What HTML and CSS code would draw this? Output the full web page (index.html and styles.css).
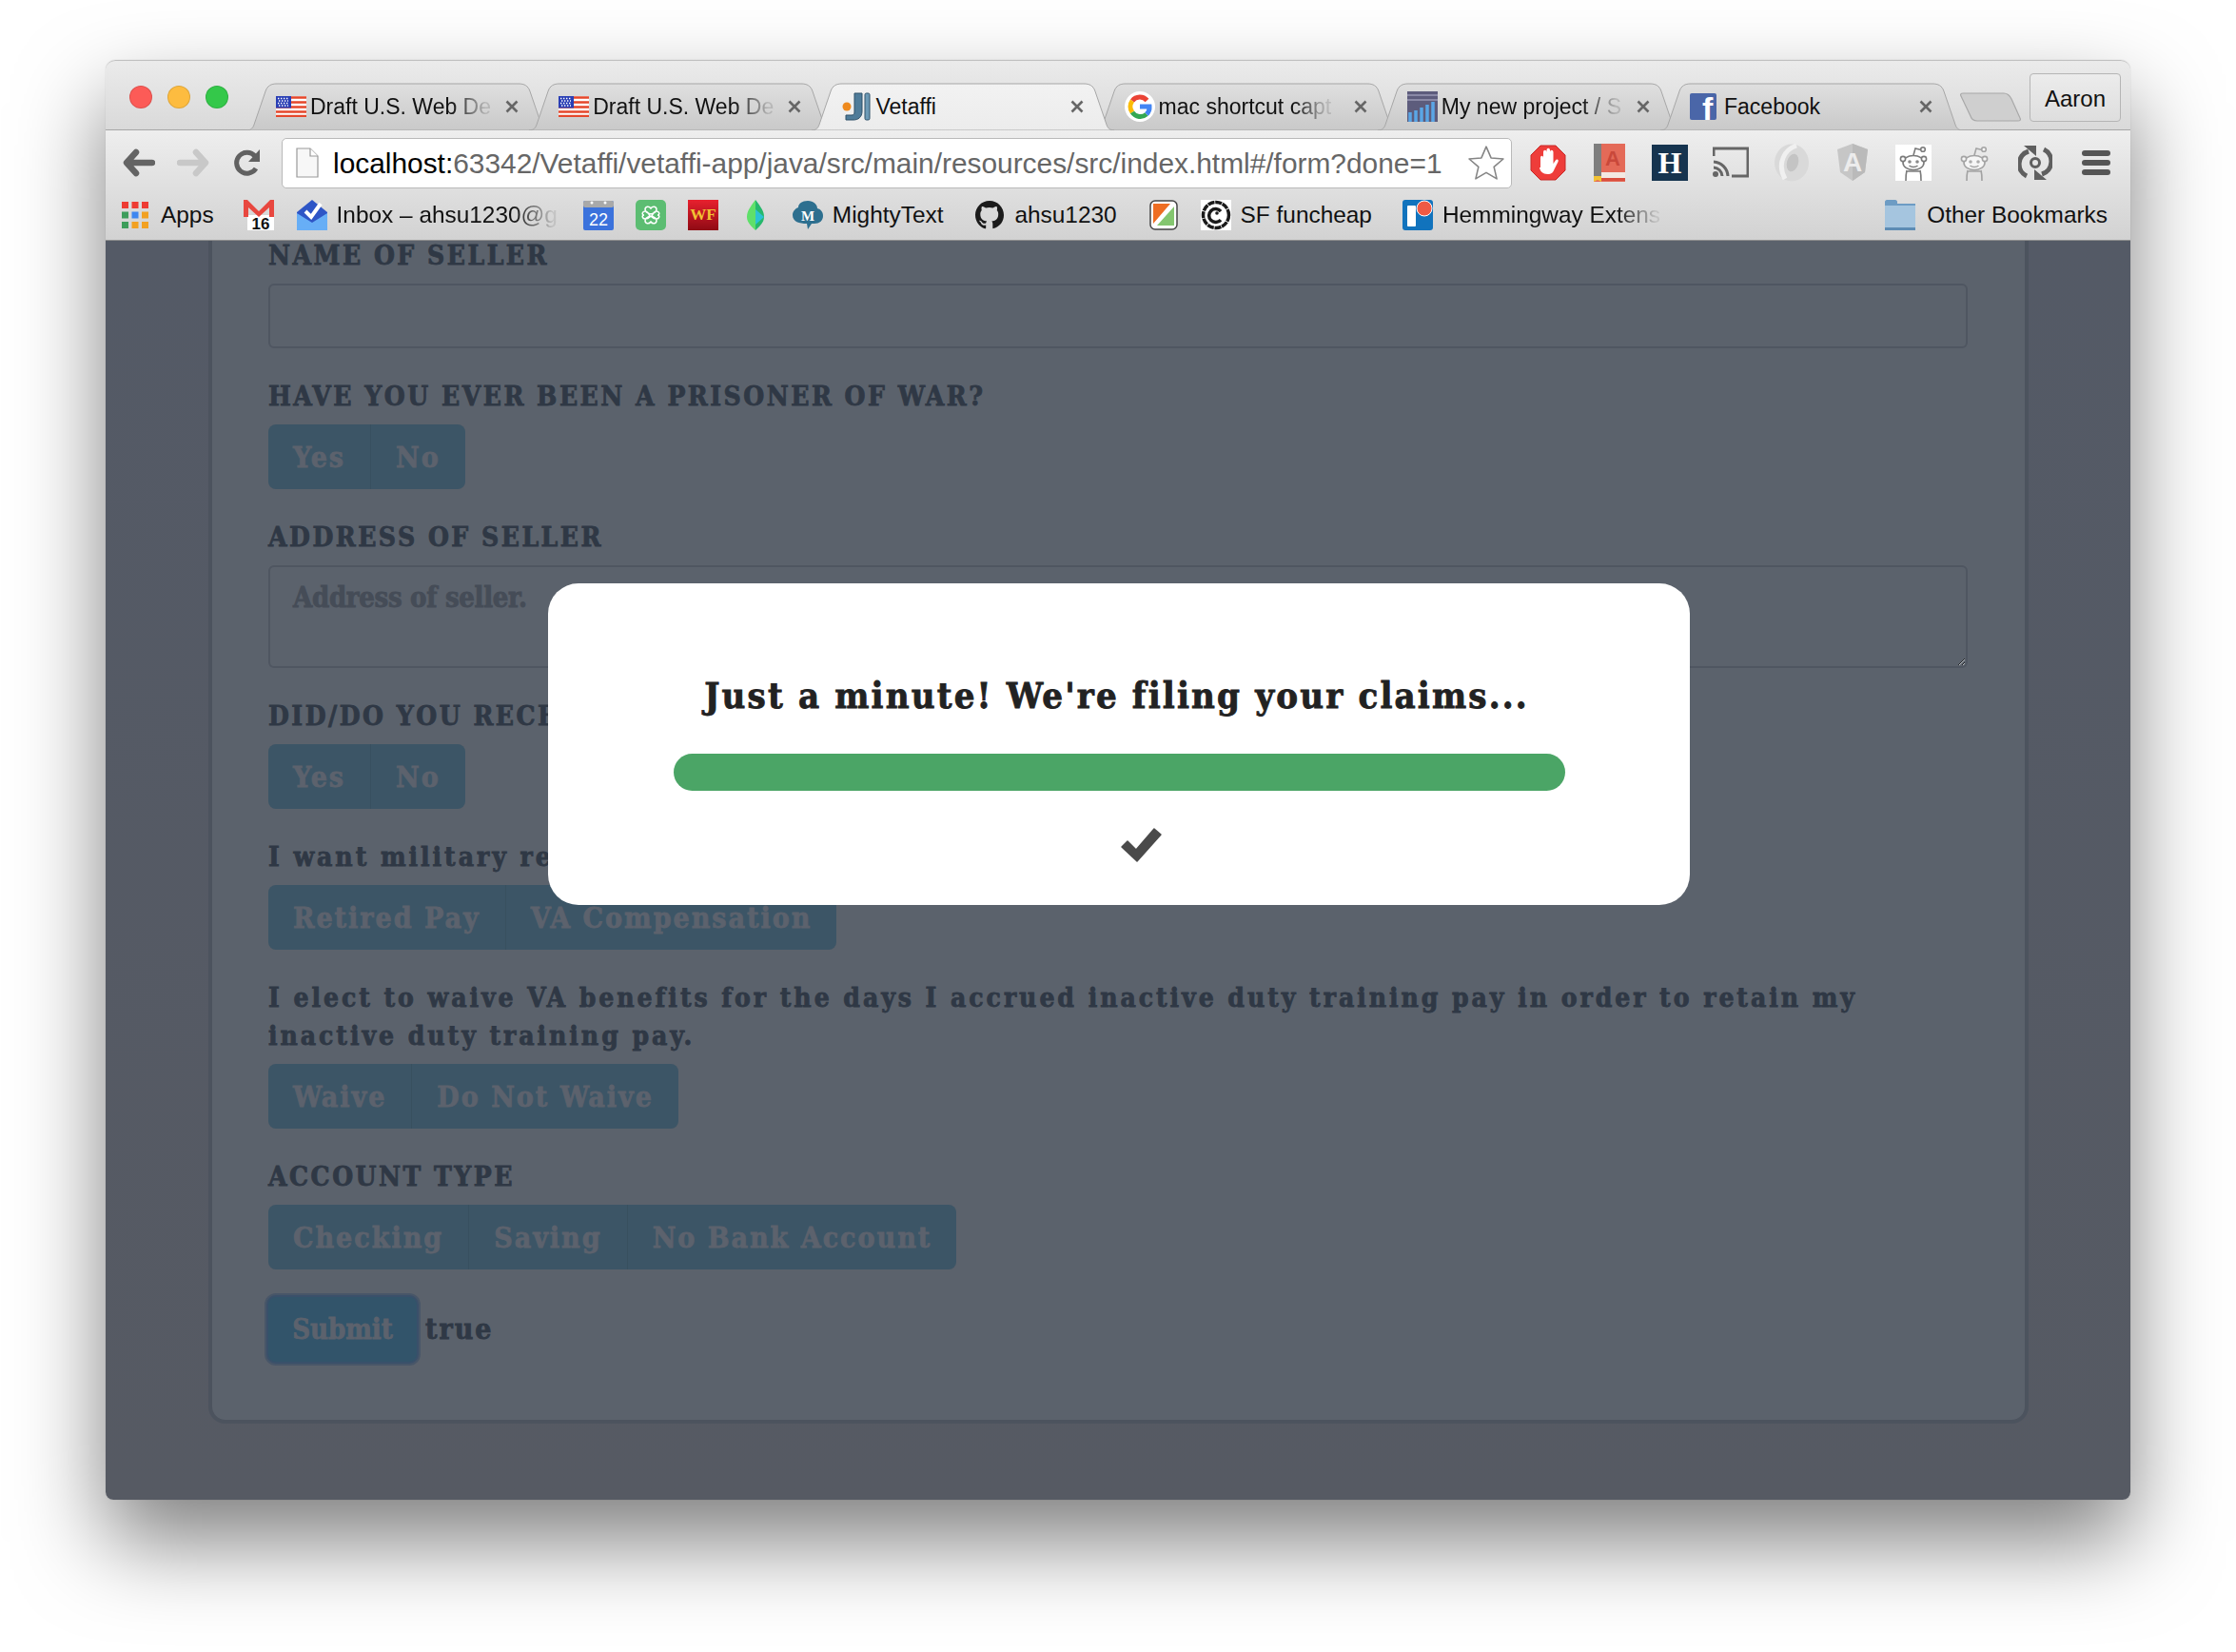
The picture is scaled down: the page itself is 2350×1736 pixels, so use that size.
FILE: index.html
```html
<!DOCTYPE html>
<html lang="en">
<head>
<meta charset="utf-8">
<title>Vetaffi</title>
<link rel="stylesheet" href="styles.css">
</head>
<body>
<svg class="sprite" width="0" height="0" aria-hidden="true">
  <defs>
    <linearGradient id="tabOff" x1="0" y1="0" x2="0" y2="1"><stop offset="0" stop-color="#dfdfdf"/><stop offset="1" stop-color="#c9c9c9"/></linearGradient>
    <linearGradient id="tabOn" x1="0" y1="0" x2="0" y2="1"><stop offset="0" stop-color="#f2f2f2"/><stop offset="1" stop-color="#ececec"/></linearGradient>
    <symbol id="tabshape" viewBox="0 0 320 50">
      <path d="M1 50C6 50 8 47 9 44L21 9C23 3 27 1 33 1L287 1C293 1 297 3 299 9L311 44C312 47 314 50 319 50Z"/>
    </symbol>
    <symbol id="flag" viewBox="0 0 32 22">
      <rect width="32" height="22" fill="#fff"/>
      <path d="M0 1.500h32M0 6.500h32M0 11.500h32M0 16.500h32M0 21h32" stroke="#e5472b" stroke-width="2.600"/>
      <rect width="16" height="12.500" fill="#2a3fb5"/>
      <path d="M2 2.500h12M3 5h10M2 7.500h12M3 10h10" stroke="#fff" stroke-width="1.300" stroke-dasharray="1.400 1.600"/>
    </symbol>
    <symbol id="close" viewBox="0 0 16 16">
      <path d="M2.500 2.500l11 11M13.500 2.500l-11 11" stroke="#666" stroke-width="2.600" fill="none"/>
    </symbol>
    <symbol id="alien" viewBox="0 0 38 38">
      <g fill="none" stroke="#7b7b7b" stroke-width="1.600">
        <ellipse cx="19" cy="19" rx="11" ry="7.500" fill="#fff"/>
        <circle cx="8" cy="15" r="2.600" fill="#fff"/><circle cx="30" cy="15" r="2.600" fill="#fff"/>
        <path d="M19 11l2-7 6 1.500"/><circle cx="29" cy="5" r="2.300" fill="#fff"/>
        <path d="M14.500 22c2.500 2 6.500 2 9 0"/>
        <path d="M12 27c-1 4-1 7-1 11M26 27c1 4 1 7 1 11M12 28h14"/>
      </g>
      <circle cx="15" cy="18" r="1.800" fill="#8a8a8a"/><circle cx="23" cy="18" r="1.800" fill="#8a8a8a"/>
    </symbol>
  </defs>
</svg>

<div class="window">
  <header class="tabstrip">
    <div class="lights">
      <span class="light light-red"></span>
      <span class="light light-yellow"></span>
      <span class="light light-green"></span>
    </div>
    <div class="tabs">
      <div class="tab">
        <svg class="tab-bg"><use href="#tabshape"/></svg>
        <svg class="fav" viewBox="0 0 32 32"><use href="#flag" y="5" width="32" height="22"/></svg>
        <span class="tab-title tab-fade">Draft U.S. Web De</span>
        <svg class="tab-x"><use href="#close"/></svg>
      </div>
      <div class="tab">
        <svg class="tab-bg"><use href="#tabshape"/></svg>
        <svg class="fav" viewBox="0 0 32 32"><use href="#flag" y="5" width="32" height="22"/></svg>
        <span class="tab-title tab-fade">Draft U.S. Web De</span>
        <svg class="tab-x"><use href="#close"/></svg>
      </div>
      <div class="tab tab-active">
        <svg class="tab-bg"><use href="#tabshape"/></svg>
        <svg class="fav" viewBox="0 0 32 32">
          <path d="M14 2h8v19c0 6-4 9-9 9H5v-5h6c2 0 3-1 3-3z" fill="#4f7c9a" stroke="#2f5068" stroke-width="1"/>
          <rect x="25" y="2" width="5" height="28" rx="1.500" fill="#6d9ab6" stroke="#2f5068" stroke-width="1"/>
          <circle cx="6" cy="16" r="4.500" fill="#ee8a1e"/>
        </svg>
        <span class="tab-title">Vetaffi</span>
        <svg class="tab-x"><use href="#close"/></svg>
      </div>
      <div class="tab">
        <svg class="tab-bg"><use href="#tabshape"/></svg>
        <svg class="fav" viewBox="0 0 32 32">
          <circle cx="16" cy="16" r="16" fill="#fff"/>
          <g fill="none" stroke-width="5">
            <path d="M23.500 9.500A10 10 0 0 0 8 10" stroke="#ea4335"/>
            <path d="M8 10a10 10 0 0 0 0 12" stroke="#fbbc05"/>
            <path d="M8 22a10 10 0 0 0 15 2" stroke="#34a853"/>
            <path d="M23 24a10 10 0 0 0 3-8H16" stroke="#4285f4"/>
          </g>
        </svg>
        <span class="tab-title tab-fade">mac shortcut capt</span>
        <svg class="tab-x"><use href="#close"/></svg>
      </div>
      <div class="tab">
        <svg class="tab-bg"><use href="#tabshape"/></svg>
        <svg class="fav" viewBox="0 0 32 32">
          <rect width="32" height="32" fill="#5d5c7c"/>
          <path d="M0 4h32M0 9h32" stroke="#8a89a6" stroke-width="2"/>
          <path d="M3 32v-10M9 32v-12M15 32v-15M21 32v-18M27 32v-21" stroke="#5aa6e6" stroke-width="3.500"/>
        </svg>
        <span class="tab-title tab-fade">My new project / S</span>
        <svg class="tab-x"><use href="#close"/></svg>
      </div>
      <div class="tab">
        <svg class="tab-bg"><use href="#tabshape"/></svg>
        <svg class="fav" viewBox="0 0 32 32">
          <rect y="2" width="28" height="28" rx="2" fill="#4a66a8"/>
          <text class="fb-f" x="13" y="30">f</text>
        </svg>
        <span class="tab-title">Facebook</span>
        <svg class="tab-x"><use href="#close"/></svg>
      </div>
    </div>
    <svg class="newtab" viewBox="0 0 64 31"><path d="M3 1H46C50 1 52 3 54 7L63 27C64 29 63 30 61 30H18C14 30 12 28 11 25L1 4C0 2 1 1 3 1Z" fill="#cfcfcf" stroke="#a8a8a8" stroke-width="1.200"/></svg>
    <button class="profile" type="button">Aaron</button>
  </header>

  <div class="lower-chrome">
    <nav class="toolbar">
      <span class="navbtn">
        <svg viewBox="0 0 34 30" width="34" height="30"><path d="M14 4L4 15l10 11M5 15h26" fill="none" stroke="#646464" stroke-width="6.500" stroke-linecap="round" stroke-linejoin="round"/></svg>
      </span>
      <span class="navbtn">
        <svg viewBox="0 0 34 30" width="34" height="30"><path d="M20 4l10 11-10 11M29 15H3" fill="none" stroke="#c8c8c8" stroke-width="6.500" stroke-linecap="round" stroke-linejoin="round"/></svg>
      </span>
      <span class="navbtn">
        <svg viewBox="0 0 30 30" width="30" height="30"><path d="M24 21a11 11 0 1 1-1-13" fill="none" stroke="#616161" stroke-width="5"/><path d="M28 1v13H16z" fill="#616161"/></svg>
      </span>
      <div class="omnibox">
        <svg class="docicon" viewBox="0 0 24 32" width="24" height="32"><path d="M1 1h14l8 8v22H1z" fill="#f7f7f7" stroke="#999" stroke-width="1.200"/><path d="M15 1v8h8" fill="#fff" stroke="#999" stroke-width="1.200"/></svg>
        <span class="url"><span class="url-host">localhost:</span>63342/Vetaffi/vetaffi-app/java/src/main/resources/src/index.html#/form?done=1</span>
        <svg class="star" viewBox="0 0 36 36" width="38" height="38"><path d="M18 2l4.800 11.200 12.200 1-9.300 8 2.800 11.800L18 27.800 7.500 34l2.800-11.800-9.300-8 12.200-1z" fill="#fff" stroke="#858585" stroke-width="1.500" stroke-linejoin="round"/></svg>
      </div>
      <div class="extensions">
        <span class="ext"><svg viewBox="0 0 38 38" width="38" height="38"><path d="M11 1h16l10 10v16L27 37H11L1 27V11z" fill="#ee3d3a" stroke="#c62a28"/><path d="M11 24V14c0-3 3-3 3 0v2-8c0-3 3.500-3 3.500 0v8V6c0-3 3.500-3 3.500 0v10V8c0-3 3.500-3 3.500 0v12l2-3c2-3 4-1 3 1l-4 8c-1 3-3 5-7 5-5 0-8-3-8.500-7z" fill="#fff"/></svg></span>
        <span class="ext"><svg viewBox="0 0 34 40" width="34" height="40"><rect x="1" width="33" height="40" fill="#e46a58"/><rect x="1" width="8" height="36" fill="#7e7e7e"/><rect x="9" y="30" width="25" height="6" fill="#f3e9e2"/><rect x="9" y="36" width="25" height="3" fill="#d94f3f"/><path d="M1 34h8v6l-4-2-4 2z" fill="#f2c233"/><text class="ext-a" x="21" y="23">A</text></svg></span>
        <span class="ext"><svg viewBox="0 0 38 38" width="38" height="38"><rect width="38" height="38" fill="#16344f"/><text class="ext-h" x="19" y="30">H</text></svg></span>
        <span class="ext"><svg viewBox="0 0 38 34" width="38" height="34"><path d="M1 10V2h36v29H20" fill="none" stroke="#666" stroke-width="3"/><path d="M1 16a16 16 0 0 1 15 15M1 22a9.500 9.500 0 0 1 9 9" fill="none" stroke="#666" stroke-width="3"/><circle cx="3" cy="29" r="3" fill="#666"/></svg></span>
        <span class="ext"><svg viewBox="0 0 38 40" width="38" height="40"><ellipse cx="19" cy="20" rx="18" ry="19.500" fill="#d9d9d9"/><path d="M24 2C12 6 3 20 12 37" fill="none" stroke="#f0f0f0" stroke-width="5"/><ellipse cx="20" cy="20" rx="6" ry="9.500" fill="#c4c4c4" transform="rotate(15 20 20)"/></svg></span>
        <span class="ext"><svg viewBox="0 0 34 40" width="34" height="40"><path d="M17 0L33 6l-3 24-13 9-13-9L1 6z" fill="#c6c6c6"/><path d="M17 0l16 6-3 24-13 9z" fill="#bababa"/><text class="ext-ng" x="17" y="29">A</text></svg></span>
        <span class="ext ext-box"><svg viewBox="0 0 38 38" width="38" height="38"><rect width="38" height="38" fill="#fff"/><use href="#alien" width="38" height="38"/></svg></span>
        <span class="ext"><svg viewBox="0 0 38 38" width="38" height="38"><use href="#alien" width="38" height="38" opacity=".62"/></svg></span>
        <span class="ext"><svg viewBox="0 0 36 38" width="36" height="38"><path d="M11 7a14 14 0 0 0-2 26M25 31a14 14 0 0 0 2-26" fill="none" stroke="#5f5f5f" stroke-width="5"/><path d="M6 1h13v11zM30 37H17V26z" fill="#5f5f5f"/><circle cx="18" cy="19" r="4.500" fill="none" stroke="#5f5f5f" stroke-width="3"/></svg></span>
        <span class="ext"><span class="menu-ic"><i></i><i></i><i></i></span></span>
      </div>
    </nav>

    <div class="bookmarks">
      <span class="bm">
        <svg viewBox="0 0 28 28" width="28" height="28"><g fill="#ee3b33"><rect width="7" height="7"/><rect x="10.500" width="7" height="7"/><rect x="21" width="7" height="7"/></g><rect y="10.500" width="7" height="7" fill="#3d9d5b"/><rect x="10.500" y="10.500" width="7" height="7" fill="#3f87f0"/><rect x="21" y="10.500" width="7" height="7" fill="#f2a122"/><rect y="21" width="7" height="7" fill="#3d9d5b"/><rect x="10.500" y="21" width="7" height="7" fill="#f2a122"/><rect x="21" y="21" width="7" height="7" fill="#f2a122"/></svg>
        <span class="bm-text bm-apps">Apps</span>
      </span>
      <span class="bm-ic"><svg viewBox="0 0 32 32" width="32" height="32"><rect x="4" y="16" width="28" height="16" fill="#fff"/><path d="M0 0h4l12 12L28 0h4v18h-5V8L16 18 5 8v10H0z" fill="#e8473f"/><text class="ic-num" x="18" y="31">16</text></svg></span>
      <span class="bm bm-inbox">
        <svg viewBox="0 0 32 32" width="32" height="32"><path d="M0 13L16 0l16 13v19H0z" fill="#2e55c6"/><path d="M0 14l16 10 16-10v18H0z" fill="#67aef6"/><path d="M9 12l6 6L25 4" fill="none" stroke="#fff" stroke-width="4"/></svg>
        <span class="bm-text bm-fade bm-inbox-text">Inbox – ahsu1230@g</span>
      </span>
      <span class="bm-ic"><svg viewBox="0 0 32 32" width="32" height="32"><rect y="1" width="32" height="31" rx="2" fill="#3b72dc"/><rect y="1" width="32" height="7" rx="2" fill="#a9a9a9"/><circle cx="9" cy="3" r="1.500" fill="#fff"/><circle cx="23" cy="3" r="1.500" fill="#fff"/><text class="ic-cal" x="16" y="27">22</text></svg></span>
      <span class="bm-ic"><svg viewBox="0 0 32 32" width="32" height="32"><rect width="32" height="32" rx="5" fill="#5cbd72"/><path d="M16 15c-4-1-6-3-6-5 0-3 4-4 6-1 2-3 6-2 6 1 0 2-2 4-6 5zm0 2c-4 1-6 3-6 5 0 3 4 4 6 1 2 3 6 2 6-1 0-2-2-4-6-5zm-1 1c-1-4-3-6-5-6-3 0-4 4-1 4-3 0-2 4 1 4 2 0 4-1 5-2zm2 0c1-4 3-6 5-6 3 0 4 4 1 4 3 0 2 4-1 4-2 0-4-1-5-2z" fill="none" stroke="#fff" stroke-width="1.500"/></svg></span>
      <span class="bm-ic"><svg viewBox="0 0 32 32" width="32" height="32"><defs><linearGradient id="wfg" x1="0" y1="0" x2="0" y2="1"><stop offset="0" stop-color="#e8202e"/><stop offset="1" stop-color="#8f0a14"/></linearGradient></defs><rect width="32" height="32" fill="url(#wfg)"/><text class="ic-wf" x="16" y="21">WF</text></svg></span>
      <span class="bm-ic"><svg viewBox="0 0 32 32" width="32" height="32"><path d="M16 0C10 8 7 12 7 18c0 6 5 10 9 14z" fill="#5fe06a"/><path d="M16 0c6 8 9 12 9 18 0 6-5 10-9 14z" fill="#26b86c"/><path d="M16 10l9 8-9 8z" fill="#2bc3d4"/></svg></span>
      <span class="bm">
        <svg viewBox="0 0 32 32" width="32" height="32"><path d="M16 1c6 0 10 4 10 8 4 1 6 4 6 8 0 5-4 8-9 8h-3l-4 6-1-6c-8 0-15-2-15-9 0-4 3-7 6-8 0-4 4-7 10-7z" fill="#2d6f8f"/><text class="ic-m" x="16" y="22">M</text></svg>
        <span class="bm-text">MightyText</span>
      </span>
      <span class="bm">
        <svg viewBox="0 0 32 32" width="32" height="32"><path d="M16 1C7.500 1 1 7.800 1 16c0 6.700 4.300 12.300 10.200 14.300.8.100 1-.3 1-.7v-3c-4.200.9-5-1.800-5-1.800-.7-1.700-1.700-2.200-1.700-2.200-1.400-.9.100-.9.100-.9 1.500.1 2.300 1.500 2.300 1.500 1.300 2.300 3.500 1.600 4.300 1.200.1-1 .5-1.600 1-2-3.300-.4-6.900-1.700-6.900-7.400 0-1.600.6-3 1.500-4-.1-.4-.7-1.900.1-4 0 0 1.300-.4 4.100 1.500a14 14 0 0 1 7.500 0c2.900-1.900 4.100-1.500 4.100-1.500.8 2.100.3 3.600.1 4 1 1 1.500 2.400 1.500 4 0 5.800-3.500 7-6.900 7.400.5.500 1 1.400 1 2.800v4.200c0 .4.300.9 1 .7C26.700 28.300 31 22.700 31 16 31 7.800 24.500 1 16 1z" fill="#1b1b1b"/></svg>
        <span class="bm-text">ahsu1230</span>
      </span>
      <span class="bm-ic"><svg viewBox="0 0 32 32" width="32" height="32"><rect x="2" y="1" width="28" height="30" rx="5" fill="#fff" stroke="#444" stroke-width="1.500"/><path d="M5 4h18L5 25z" fill="#ee6d22"/><path d="M27 7v20H9z" fill="#84c66f"/></svg></span>
      <span class="bm">
        <svg viewBox="0 0 32 32" width="32" height="32"><rect width="32" height="32" fill="#fff"/><circle cx="16" cy="16" r="13.500" fill="none" stroke="#1a1a1a" stroke-width="3.500" stroke-dasharray="7 .8"/><path d="M21 12a7 7 0 1 0 0 9" fill="none" stroke="#1a1a1a" stroke-width="3.500"/><circle cx="17" cy="14" r="1.800" fill="#1a1a1a"/></svg>
        <span class="bm-text bm-sf">SF funcheap</span>
      </span>
      <span class="bm">
        <svg viewBox="0 0 32 32" width="32" height="32"><rect width="32" height="32" rx="3" fill="#1173bd"/><rect x="5" y="6" width="9" height="22" rx="1" fill="#fff"/><circle cx="23" cy="9" r="8" fill="#ee5a45" stroke="#fff"/></svg>
        <span class="bm-text bm-fade">Hemmingway Extens</span>
      </span>
      <span class="bm bm-other">
        <svg viewBox="0 0 32 32" width="32" height="32"><path d="M0 6V2c0-1 1-2 2-2h9c1 0 2 1 2 2v2h19v28H0z" fill="#6d9cc4"/><rect y="6" width="32" height="24" fill="#a5c5df"/><rect y="29" width="32" height="3" fill="#5d8cb4"/></svg>
        <span class="bm-text">Other Bookmarks</span>
      </span>
    </div>
  </div>

  <main class="page">
    <form class="card">
      <div class="field">
        <label class="label">NAME OF SELLER</label>
        <input class="input" type="text">
      </div>
      <div class="field">
        <label class="label">HAVE YOU EVER BEEN A PRISONER OF WAR?</label>
        <div class="group"><span class="opt">Yes</span><span class="opt">No</span></div>
      </div>
      <div class="field">
        <label class="label">ADDRESS OF SELLER</label>
        <textarea class="input area" placeholder="Address of seller."></textarea>
      </div>
      <div class="field">
        <label class="label">DID/DO YOU RECEIVE VA PAY?</label>
        <div class="group"><span class="opt">Yes</span><span class="opt">No</span></div>
      </div>
      <div class="field">
        <label class="label label-plain">I want military retired pay</label>
        <div class="group"><span class="opt">Retired Pay</span><span class="opt">VA Compensation</span></div>
      </div>
      <div class="field">
        <label class="label label-plain">I elect to waive VA benefits for the days I accrued inactive duty training pay in order to retain my inactive duty training pay.</label>
        <div class="group"><span class="opt">Waive</span><span class="opt">Do Not Waive</span></div>
      </div>
      <div class="field">
        <label class="label">ACCOUNT TYPE</label>
        <div class="group"><span class="opt">Checking</span><span class="opt">Saving</span><span class="opt">No Bank Account</span></div>
      </div>
      <div class="submit-row">
        <button class="submit" type="button">Submit</button>
        <span class="flag-text">true</span>
      </div>
    </form>

    <section class="modal">
      <h2 class="modal-title">Just a minute! We're filing your claims...</h2>
      <div class="progress"></div>
      <svg class="check" viewBox="0 0 46 38" width="46" height="38"><path d="M3 21l6-6 9 9L37 2l7 6-25 28z" fill="#4a4a4a" stroke="#4a4a4a" stroke-width="1.500" stroke-linejoin="round"/></svg>
    </section>
  </main>
</div>
</body>
</html>
```
FILE: styles.css
```css
* { box-sizing: border-box; }
html, body { margin: 0; padding: 0; background: #fff; }
body { width: 2350px; height: 1736px; overflow: hidden; font-family: "Liberation Sans", Arial, sans-serif; }
.sprite { position: absolute; }

.window {
  margin: 63px 0 0 111px;
  width: 2128px;
  height: 1513px;
  border-radius: 10px 10px 8px 8px;
  box-shadow: 0 44px 92px rgba(0, 0, 0, .5), 0 0 1px rgba(0, 0, 0, .3);
  position: relative;
  display: flex;
  flex-direction: column;
  overflow: hidden;
}

/* tab strip */
.tabstrip {
  height: 74px;
  flex: none;
  display: flex;
  background: linear-gradient(#ebebeb, #d9d9d9);
  border-top: 1px solid #c0c0c0;
  box-shadow: inset 0 -1px 0 #a6a6a6;
  border-radius: 10px 10px 0 0;
  padding-left: 25px;
}
.lights { display: flex; gap: 16px; width: 104px; margin-top: 26px; flex: none; }
.light { width: 24px; height: 24px; border-radius: 50%; border: 1px solid rgba(0, 0, 0, .12); }
.light-red { background: #fc5b57; }
.light-yellow { background: #fdbc40; }
.light-green { background: #34c84a; }

.tabs { display: flex; margin: 23px 0 0 18px; flex: none; }
.tab {
  position: relative;
  width: 320px;
  height: 50px;
  margin-right: -22.8px;
  padding: 0 32px;
  display: flex;
  align-items: center;
  gap: 4px;
  flex: none;
}
.tab-bg { position: absolute; left: 0; top: 0; width: 320px; height: 50px; fill: url(#tabOff); stroke: #a6a6a6; stroke-width: 1; }
.tab-active { z-index: 2; }
.tab-active .tab-bg { fill: url(#tabOn); }
.fav { position: relative; width: 32px; height: 32px; flex: none; }
.tab-title {
  position: relative;
  font-size: 23px;
  white-space: nowrap;
  color: #111;
}
.tab-fade {
  -webkit-mask-image: linear-gradient(to right, #000 78%, rgba(0, 0, 0, .15) 97%);
  mask-image: linear-gradient(to right, #000 78%, rgba(0, 0, 0, .15) 97%);
}
.tab-x { position: relative; width: 16px; height: 16px; margin-left: auto; flex: none; }
.fb-f { font: bold 34px "Liberation Sans", sans-serif; fill: #fff; }

.newtab { width: 64px; height: 31px; margin: 33px 0 0 19px; flex: none; }
.profile {
  width: 96px;
  height: 51px;
  margin: 13px 10px 0 auto;
  flex: none;
  background: linear-gradient(#ececec, #dedede);
  border: 1px solid #b5b5b5;
  border-radius: 4px;
  font: 24px "Liberation Sans", sans-serif;
  color: #111;
  padding: 2px 0 0;
}

/* toolbar */
.lower-chrome { flex: none; background: linear-gradient(#eeeeee, #d2d2d2); border-bottom: 1px solid #8f8f8f; }
.toolbar { height: 68px; display: flex; align-items: center; padding-left: 6px; }
.navbtn { width: 57px; display: flex; justify-content: center; flex: none; }
.omnibox {
  width: 1293px;
  height: 53px;
  margin-left: 8px;
  flex: none;
  background: #fff;
  border: 1px solid #b9b9b9;
  border-radius: 5px;
  display: flex;
  align-items: center;
  padding: 0 7px 0 14px;
}
.docicon { flex: none; }
.url { margin-left: 15px; padding-top: 2px; font-size: 29.88px; color: #666; white-space: nowrap; flex: 1; }
.url-host { color: #000; }
.star { flex: none; }
.extensions { display: flex; margin-left: 6px; flex: none; }
.ext { width: 64px; display: flex; justify-content: center; align-items: center; height: 40px; }
.menu-ic { display: flex; flex-direction: column; gap: 4px; }
.menu-ic i { display: block; width: 30px; height: 6px; border-radius: 3px; background: #555; }
.ext-a { font: bold 22px "Liberation Sans", sans-serif; fill: #c9483a; text-anchor: middle; }
.ext-h { font: bold 32px "Liberation Serif", serif; fill: #fff; text-anchor: middle; }
.ext-ng { font: bold 28px "Liberation Sans", sans-serif; fill: #ececec; text-anchor: middle; }

/* bookmarks */
.bookmarks { height: 47px; display: flex; align-items: center; gap: 23px; padding: 0 24px 6px 17px; }
.bm, .bm-ic { display: flex; align-items: center; gap: 10px; flex: none; }
.bm svg, .bm-ic svg { flex: none; }
.bm-text { font-size: 24.4px; color: #111; white-space: nowrap; margin-right: 10px; }
.bm-apps { margin-left: 3px; margin-right: 8px; }
.bm-inbox { margin-left: 1px; }
.bm-inbox-text { margin-right: 4px; }
.bm-sf { margin-right: 9px; }
.bm-other { margin-left: auto; gap: 12px; }
.bm-other .bm-text { margin-right: 0; }
.bm-fade {
  -webkit-mask-image: linear-gradient(to right, #000 80%, rgba(0, 0, 0, .1) 98%);
  mask-image: linear-gradient(to right, #000 80%, rgba(0, 0, 0, .1) 98%);
}
.ic-num { font: bold 17px "Liberation Sans", sans-serif; fill: #111; text-anchor: middle; }
.ic-cal { font: 18px "Liberation Sans", sans-serif; fill: #fff; text-anchor: middle; }
.ic-wf { font: bold 17px "Liberation Serif", serif; fill: #f2c233; text-anchor: middle; }
.ic-m { font: bold 15px "Liberation Serif", serif; fill: #fff; text-anchor: middle; }

/* page */
.page {
  flex: 1;
  position: relative;
  overflow: hidden;
  background: linear-gradient(#545a66, #565a63);
  font-family: "DejaVu Serif", serif;
  font-stretch: condensed;
  font-weight: 700;
  -webkit-text-stroke: .8px currentColor;
}
.card {
  width: 1913px;
  margin: -60px 0 0 108px;
  padding: 50px 60px 61px 59px;
  border: 4px solid #4c535e;
  border-radius: 18px;
  background: #5b626c;
}
.field { margin-bottom: 29px; }
.label {
  display: block;
  padding-top: 2px;
  margin-bottom: 9px;
  font-size: 28px;
  line-height: 40px;
  letter-spacing: 2.5px;
  color: #2f3845;
}
.label-plain { letter-spacing: 2.95px; }
.input {
  display: block;
  width: 100%;
  height: 68px;
  background: transparent;
  border: 2px solid #4f5661;
  border-radius: 6px;
  padding: 0 24px;
  font: inherit;
  outline: 0;
}
.area { height: 108px; padding: 12px 24px; font-size: 29px; line-height: 40px; color: #454c57; resize: vertical; }
.area::placeholder { color: #454c57; opacity: 1; letter-spacing: -.3px; }

.group {
  display: inline-flex;
  height: 68px;
  vertical-align: top;
  background: #3c5566;
  border-radius: 8px;
}
.opt {
  padding: 0 26px 0 26px;
  display: flex;
  align-items: center;
  font-size: 30px;
  letter-spacing: 2px;
  color: #5c626d;
  white-space: nowrap;
}
.opt + .opt { border-left: 1px solid #38505f; }
.submit-row { display: flex; align-items: center; gap: 9px; height: 68px; }
.submit {
  height: 68px;
  width: 156px;
  padding: 0;
  background: #32546a;
  border: 0;
  border-radius: 8px;
  box-shadow: 0 0 0 2px #3a506a, 0 0 0 4px #485668;
  font: inherit;
  font-size: 29px;
  color: #5c626d;
  -webkit-text-stroke: .8px #5c626d;
}
.flag-text { font-size: 30px; letter-spacing: 2px; color: #2f3845; padding-bottom: 2px; }

/* modal */
.modal {
  position: absolute;
  left: 465px;
  top: 360px;
  width: 1200px;
  height: 338px;
  background: #fff;
  border-radius: 32px;
  padding-top: 93px;
  display: flex;
  flex-direction: column;
  align-items: flex-start;
}
.modal-title {
  align-self: center;
  margin: 0 0 36px -5px;
  font-size: 38px;
  line-height: 50px;
  letter-spacing: 2.15px;
  color: #222;
  white-space: nowrap;
}
.progress { width: 937px; height: 39px; margin-left: 132px; border-radius: 20px; background: #4ba566; }
.check { margin: 38px 0 0 600px; }
```
